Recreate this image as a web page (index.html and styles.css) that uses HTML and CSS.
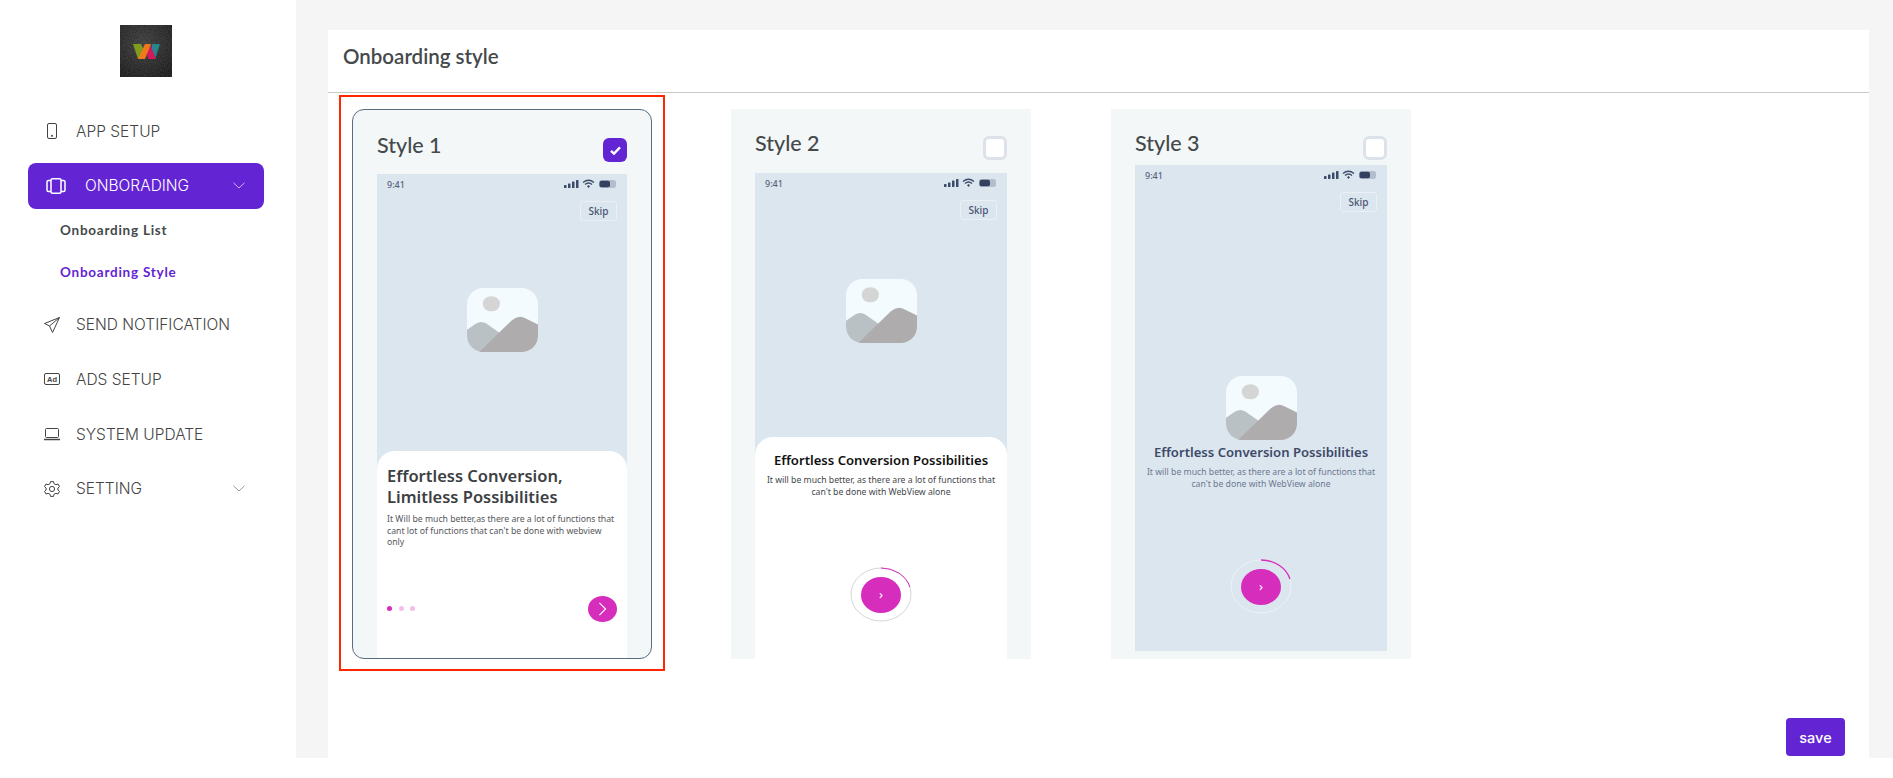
FILE: index.html
```html
<!DOCTYPE html>
<html lang="en">

<head>
    <meta charset="UTF-8">
    <meta name="viewport" content="width=device-width, initial-scale=1.0">
    <title>Onboarding style</title>
    <link rel="stylesheet" href="styles.css">
</head>

<body>
    <svg class="defs" width="0" height="0">
        <defs>
            <clipPath id="pic-clip">
                <rect width="70" height="63" rx="16" />
            </clipPath>
            <symbol id="pic" viewBox="0 0 70 63" preserveAspectRatio="none">
                <g clip-path="url(#pic-clip)">
                    <rect width="70" height="63" fill="#f3fbfe" />
                    <ellipse cx="24" cy="15.500" rx="8.500" ry="7.500" fill="#d5d5d5" />
                    <path d="M0 41 L9 35 Q14 32 19 35 L32 44 L20 63 L0 63 Z" fill="#b9c1c5" />
                    <path d="M12 63 L44 32 Q51 26 58 30 L70 36 L70 63 Z" fill="#aeacac" />
                </g>
            </symbol>
            <symbol id="status-icons" viewBox="0 0 53 10">
                <rect x="0" y="6" width="2.500" height="3" rx=".6" fill="#3d4a68" />
                <rect x="4" y="4.500" width="2.500" height="4.500" rx=".6" fill="#3d4a68" />
                <rect x="8" y="2.500" width="2.500" height="6.500" rx=".6" fill="#3d4a68" />
                <rect x="12" y="1" width="2.500" height="8" rx=".6" fill="#3d4a68" />
                <path d="M19 3.500 Q24.500 -1 30 3.500 M21 5.500 Q24.500 2.500 28 5.500" fill="none" stroke="#3d4a68" stroke-width="1.400" />
                <path d="M23 7.200 L24.500 6 L26 7.200 L24.500 9 Z" fill="#3d4a68" />
                <rect x="35" y="1" width="17" height="8" rx="2.500" fill="#b4bdcb" />
                <rect x="35.500" y="1.800" width="10.500" height="6.400" rx="2" fill="#34405f" />
            </symbol>
        </defs>
    </svg>

    <div class="app">
        <aside class="sidebar">
            <svg class="logo" viewBox="0 0 52 52">
                <defs>
                    <radialGradient id="logo-bg" cx="45%" cy="35%" r="75%">
                        <stop offset="0" stop-color="#3c3c3c" />
                        <stop offset="1" stop-color="#1b1b1b" />
                    </radialGradient>
                    <filter id="logo-grain">
                        <feTurbulence type="fractalNoise" baseFrequency=".7" numOctaves="2" />
                        <feColorMatrix values="0 0 0 0 1  0 0 0 0 1  0 0 0 0 1  .5 0 0 0 -.12" />
                    </filter>
                </defs>
                <rect width="52" height="52" fill="url(#logo-bg)" />
                <rect width="52" height="52" filter="url(#logo-grain)" opacity=".35" />
                <path d="M13 19 L21 19 L26 30 L24 34 L18 34 Z" fill="#7f9c1d" />
                <path d="M32 19 L40 19 L35 34 L31 27 Z" fill="#23878b" />
                <path d="M25 19 L30 19 L36 34 L28 34 Z" fill="#d3185c" />
                <path d="M18 34 L25 19 L31 19 L25 34 Z" fill="#ee7a1c" />
            </svg>

            <nav class="menu">
                <a class="menu-item">
                    <svg class="menu-icon" viewBox="0 0 16 16" fill="none" stroke="#444" stroke-width="1">
                        <rect x="3.500" y=".5" width="9" height="15" rx="1.500" />
                        <circle cx="8" cy="12.800" r=".6" fill="#444" />
                    </svg>
                    <span>APP SETUP</span>
                </a>

                <a class="menu-item menu-item-active">
                    <svg class="menu-icon-big" viewBox="0 0 20 16" fill="none" stroke="#fff" stroke-width="1.500">
                        <rect x="5" y=".8" width="10" height="14.400" rx="1.500" />
                        <path d="M5 2.500 H2.500 Q1 2.500 1 4 V12 Q1 13.500 2.500 13.500 H5 M15 2.500 H17.500 Q19 2.500 19 4 V12 Q19 13.500 17.500 13.500 H15" />
                    </svg>
                    <span>ONBORADING</span>
                    <svg class="chevron" viewBox="0 0 12 7" fill="none" stroke="#c9b4ef" stroke-width="1">
                        <path d="M.5 .8 L6 6 L11.500 .8" />
                    </svg>
                </a>
                <a class="submenu-item">Onboarding List</a>
                <a class="submenu-item submenu-item-active">Onboarding Style</a>

                <a class="menu-item">
                    <svg class="menu-icon" viewBox="0 0 16 16" fill="none" stroke="#444" stroke-width="1">
                        <path d="M15.500 .5 L.5 6.500 L5.500 9 L8.500 15.500 Z M15.500 .5 L5.500 9" />
                    </svg>
                    <span>SEND NOTIFICATION</span>
                </a>
                <a class="menu-item">
                    <svg class="menu-icon" viewBox="0 0 16 16">
                        <rect x=".5" y="2.500" width="15" height="11" rx="1.500" fill="none" stroke="#444" />
                        <text x="8" y="11" text-anchor="middle" class="ad-text">Ad</text>
                    </svg>
                    <span>ADS SETUP</span>
                </a>
                <a class="menu-item">
                    <svg class="menu-icon" viewBox="0 0 16 16" fill="none" stroke="#444" stroke-width="1">
                        <rect x="1.500" y="2.500" width="13" height="9" rx="1" />
                        <path d="M0 13.500 H16" stroke-width="1.500" />
                    </svg>
                    <span>SYSTEM UPDATE</span>
                </a>
                <a class="menu-item">
                    <svg class="menu-icon" viewBox="0 0 16 16" fill="none" stroke="#444" stroke-width="1">
                        <path d="M6.500 .6 H9.500 L10 2.700 L11.900 3.700 L14 3 L15.500 5.600 L13.900 7 V9 L15.500 10.400 L14 13 L11.900 12.300 L10 13.300 L9.500 15.400 H6.500 L6 13.300 L4.100 12.300 L2 13 L.5 10.400 L2.100 9 V7 L.5 5.600 L2 3 L4.100 3.700 L6 2.700 Z" stroke-linejoin="round" />
                        <circle cx="8" cy="8" r="2.600" />
                    </svg>
                    <span>SETTING</span>
                    <svg class="chevron" viewBox="0 0 12 7" fill="none" stroke="#999" stroke-width="1">
                        <path d="M.5 .8 L6 6 L11.500 .8" />
                    </svg>
                </a>
            </nav>
        </aside>

        <main class="main">
            <section class="panel">
                <h1 class="panel-title">Onboarding style</h1>

                <div class="styles">
                    <!-- style 1 -->
                    <div class="slot slot-selected">
                        <div class="style-card style-card-one">
                            <div class="style-head">
                                <h2>Style 1</h2>
                                <span class="check check-on">
                                    <svg viewBox="0 0 12 10" fill="none" stroke="#fff" stroke-width="2.600">
                                        <path d="M1 5.500 L4.300 8.500 L11 1.500" />
                                    </svg>
                                </span>
                            </div>
                            <div class="phone">
                                <div class="status"><span>9:41</span><svg><use href="#status-icons" /></svg></div>
                                <span class="skip">Skip</span>
                                <svg class="pic"><use href="#pic" /></svg>
                                <div class="sheet sheet-left">
                                    <h3>Effortless Conversion, Limitless Possibilities</h3>
                                    <p>It Will be much better,as there are a lot of functions that cant lot of functions that can't be done with webview only</p>
                                    <div class="sheet-foot">
                                        <span class="dots"><i class="dot-on"></i><i></i><i></i></span>
                                        <span class="next">
                                            <svg viewBox="0 0 10 16" fill="none" stroke="#fff" stroke-width="1.300">
                                                <path d="M1.500 1 L8.500 8 L1.500 15" />
                                            </svg>
                                        </span>
                                    </div>
                                </div>
                            </div>
                        </div>
                    </div>

                    <!-- style 2 -->
                    <div class="slot">
                        <div class="style-card style-card-two">
                            <div class="style-head">
                                <h2>Style 2</h2>
                                <span class="check"></span>
                            </div>
                            <div class="phone">
                                <div class="status"><span>9:41</span><svg><use href="#status-icons" /></svg></div>
                                <span class="skip">Skip</span>
                                <svg class="pic"><use href="#pic" /></svg>
                                <div class="sheet sheet-center">
                                    <h3>Effortless Conversion Possibilities</h3>
                                    <p>It will be much better, as there are a lot of functions that can't be done with WebView alone</p>
                                    <div class="ring ring-grey">
                                        <svg class="ring-line" viewBox="0 0 62 55" fill="none">
                                            <ellipse cx="31" cy="27.500" rx="30" ry="26.500" stroke="#d5d5d5" />
                                            <path d="M31 1 A30 26.500 0 0 1 60 20" stroke="#d62dbd" />
                                        </svg>
                                        <span class="ring-btn">&rsaquo;</span>
                                    </div>
                                </div>
                            </div>
                        </div>
                    </div>

                    <!-- style 3 -->
                    <div class="slot">
                        <div class="style-card style-card-three">
                            <div class="style-head">
                                <h2>Style 3</h2>
                                <span class="check"></span>
                            </div>
                            <div class="phone">
                                <div class="status"><span>9:41</span><svg><use href="#status-icons" /></svg></div>
                                <span class="skip">Skip</span>
                                <svg class="pic"><use href="#pic" /></svg>
                                <div class="sheet sheet-center sheet-clear">
                                    <h3>Effortless Conversion Possibilities</h3>
                                    <p>It will be much better, as there are a lot of functions that can't be done with WebView alone</p>
                                    <div class="ring">
                                        <svg class="ring-line" viewBox="0 0 62 55" fill="none">
                                            <ellipse cx="31" cy="27.500" rx="30" ry="26.500" stroke="#eef2f6" />
                                            <path d="M31 1 A30 26.500 0 0 1 60 20" stroke="#d62dbd" stroke-width="1.300" />
                                        </svg>
                                        <span class="ring-btn">&rsaquo;</span>
                                    </div>
                                </div>
                            </div>
                        </div>
                    </div>
                </div>

                <div class="panel-foot">
                    <button class="save">save</button>
                </div>
            </section>
        </main>
    </div>
</body>

</html>
```

FILE: styles.css
```css
/* reset start */
* {
    padding: 0;
    margin: 0;
    box-sizing: border-box;
}

html,
body {
    width: 100%;
    height: 100%;
}

body {
    overflow: hidden;
    background-color: #fff;
    font-family: "Lato", "Noto Sans", sans-serif;
    color: #44494b;
}

/* reset end */
.defs {
    display: block;
    height: 0;
}

.app {
    display: flex;
    height: 758px;
}

/* sidebar */
.sidebar {
    width: 296px;
    flex-shrink: 0;
    background-color: #fff;
    padding-top: 25px;
}

.logo {
    display: block;
    width: 52px;
    height: 52px;
    margin: 0 0 31px 120px;
}

.menu {
    display: flex;
    flex-direction: column;
    padding: 0 32px 0 28px;
}

.menu-item {
    display: flex;
    align-items: center;
    height: 46px;
    margin-bottom: 8.700px;
    padding-left: 16px;
    font-family: "Inter", sans-serif;
    font-size: 15.500px;
    font-weight: 300;
    color: #444;
}

.menu-icon {
    width: 16px;
    height: 16px;
    margin-right: 16px;
    flex-shrink: 0;
}

.menu-icon-big {
    width: 20px;
    height: 16px;
    margin-right: 19px;
    flex-shrink: 0;
}

.ad-text {
    font-family: "Liberation Sans", sans-serif;
    font-size: 7.500px;
    font-weight: 700;
    fill: #444;
}

.chevron {
    width: 12px;
    height: 7px;
    margin-left: auto;
    margin-right: 19px;
}

.menu-item-active {
    margin-bottom: 0;
    padding-left: 18px;
    background-color: #6324d4;
    border-radius: 8px;
    color: #fff;
}

.submenu-item {
    display: block;
    height: 42px;
    padding-left: 32px;
    line-height: 42px;
    font-size: 13.500px;
    font-weight: 700;
    letter-spacing: .75px;
    color: #44494b;
}

.submenu-item-active {
    color: #6324d4;
    margin-bottom: 9px;
}

/* main */
.main {
    flex: 1;
    background-color: #f5f5f5;
    padding: 30px 24px 0 32px;
}

.panel {
    height: 728px;
    background-color: #fff;
    display: flex;
    flex-direction: column;
}

.panel-title {
    height: 63px;
    padding-left: 15px;
    line-height: 52px;
    font-size: 20.500px;
    font-weight: 600;
    border-bottom: 1px solid #c8c8c8;
}

.styles {
    display: grid;
    grid-template-columns: 379px 380px 326px;
    padding: 2px 0 0 11px;
}

.slot {
    width: 326px;
    padding: 14px 13px 12px;
}

.slot-selected {
    border: 2px solid #ff2600;
    padding: 12px 11px 10px;
}

.style-card {
    width: 300px;
    height: 550px;
    background-color: #f3f7f8;
    padding: 0 24px;
}

.style-card-one {
    border: 1px solid #5b6b80;
    border-radius: 12px;
}

.style-head {
    display: flex;
    justify-content: space-between;
    height: 64px;
    padding-top: 20px;
}

.style-card-one .style-head {
    padding-top: 21px;
}

.style-card-three .style-head {
    height: 56px;
}

.style-head h2 {
    font-size: 21.500px;
    font-weight: 500;
    line-height: 28px;
}

.check {
    width: 24px;
    height: 24px;
    margin-top: 7px;
    background-color: #fff;
    border: 3px solid #dde1ea;
    border-radius: 6px;
    display: flex;
    align-items: center;
    justify-content: center;
}

.check-on {
    background-color: #6324d4;
    border: 0;
}

.check-on svg {
    width: 11px;
    height: 9px;
}

/* phone mockups */
.phone {
    display: flex;
    flex-direction: column;
    width: 252px;
    height: 486px;
    background-color: #dce6ef;
    font-family: "Noto Sans", sans-serif;
}

.style-card-one .phone {
    width: 250px;
    height: 484px;
}

.status {
    display: flex;
    justify-content: space-between;
    align-items: center;
    height: 20px;
    padding: 0 10px;
    font-size: 9px;
    font-weight: 500;
    color: #59647c;
}

.status svg {
    width: 53px;
    height: 10px;
}

.skip {
    align-self: flex-end;
    width: 37px;
    height: 20px;
    margin: 7px 10px 0 0;
    text-align: center;
    line-height: 18px;
    font-size: 10px;
    font-weight: 500;
    color: #4a5573;
    border: 1px solid #eaf0f5;
    border-radius: 3px;
}

.pic {
    align-self: center;
    width: 71px;
    height: 64px;
    margin-top: 59px;
    flex-shrink: 0;
}

.style-card-one .pic {
    margin-top: 67px;
}

.style-card-three .pic {
    margin-top: 164px;
}

.sheet {
    flex: 1;
    margin-top: auto;
    background-color: #fff;
    border-radius: 18px 18px 0 0;
}

.sheet h3 {
    color: #3c4043;
    font-weight: 600;
}

.sheet p {
    font-size: 8.700px;
    line-height: 11.500px;
    color: #55585c;
}

.sheet-left {
    flex: none;
    height: 207px;
    padding: 15px 10px 0;
    display: flex;
    flex-direction: column;
}

.sheet-left h3 {
    font-size: 16.500px;
    line-height: 20.500px;
    margin-bottom: 7px;
}

.sheet-foot {
    display: flex;
    justify-content: space-between;
    align-items: center;
    margin-top: 47px;
}

.dots {
    display: flex;
    gap: 6.500px;
}

.dots i {
    width: 5px;
    height: 5px;
    border-radius: 50%;
    background-color: #f2bfe9;
}

.dots .dot-on {
    background-color: #d62dbd;
}

.next {
    width: 29px;
    height: 26px;
    border-radius: 50%;
    background-color: #d62dbd;
    display: flex;
    align-items: center;
    justify-content: center;
}

.next svg {
    width: 9px;
    height: 14px;
}

.sheet-center {
    flex: none;
    height: 222px;
    padding: 13px 10px 0;
    text-align: center;
}

.sheet-center h3 {
    font-size: 13.100px;
    line-height: 20px;
    color: #111;
    margin-bottom: 5px;
}

.sheet-center p {
    color: #44474b;
}

.sheet-clear {
    background-color: transparent;
    height: auto;
    margin-top: 0;
    padding-top: 2px;
}

.sheet-clear h3 {
    color: #3d4a68;
}

.sheet-clear p {
    color: #6c7890;
}

.ring {
    position: relative;
    display: flex;
    align-items: center;
    justify-content: center;
    width: 62px;
    height: 55px;
    margin: 69px auto 0;
}

.ring-line {
    position: absolute;
    left: 0;
    top: 0;
    width: 62px;
    height: 55px;
}

.ring-btn {
    width: 40px;
    height: 36px;
    border-radius: 50%;
    background-color: #d62dbd;
    color: #fff;
    text-align: center;
    font-size: 13px;
    line-height: 34px;
}

/* footer */
.panel-foot {
    display: flex;
    justify-content: flex-end;
    padding: 47px 24px 0 0;
}

.save {
    width: 59px;
    height: 38px;
    background-color: #6324d4;
    border: 0;
    border-radius: 4px;
    color: #fff;
    font-family: "Inter", sans-serif;
    font-size: 14.500px;
    font-weight: 500;
}
```
